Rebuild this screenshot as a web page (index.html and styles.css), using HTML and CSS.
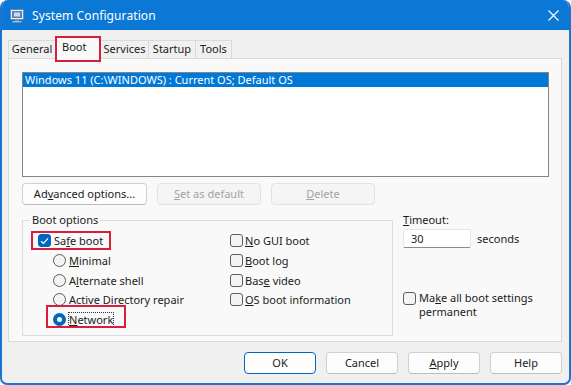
FILE: index.html
```html
<!DOCTYPE html>
<html>
<head>
<meta charset="utf-8">
<link rel="stylesheet" href="styles.css">
</head>
<body>
<div class="window">
  <div class="titlebar">
    <svg class="app-icon" width="14" height="14" viewBox="0 0 14 14">
      <rect x="0.5" y="0.5" width="13" height="10" rx="1" fill="#e8edf3" stroke="#7a8796"/>
      <rect x="2" y="2" width="10" height="7" fill="#4f86c9"/>
      <rect x="4" y="3.5" width="6" height="4" fill="#c9d9ee"/>
      <rect x="5" y="10.5" width="4" height="1.5" fill="#8895a5"/>
      <rect x="2.5" y="12" width="9" height="1.5" fill="#aab4c0"/>
    </svg>
    <span class="title">System Configuration</span>
    <svg class="close" width="11" height="11" viewBox="0 0 11 11">
      <path d="M0.5 0.5 L10.5 10.5 M10.5 0.5 L0.5 10.5" stroke="#fff" stroke-width="1.1" fill="none"/>
    </svg>
  </div>
  <div class="client">
    <div class="tabs">
      <div class="tab t-general">General</div>
      <div class="tab active t-boot mark-tab">Boot</div>
      <div class="tab t-services">Services</div>
      <div class="tab t-startup">Startup</div>
      <div class="tab t-tools">Tools</div>
    </div>
    <div class="panel">
      <div class="oslist">
        <div class="osrow">Windows 11 (C:\WINDOWS) : Current OS; Default OS</div>
      </div>
      <div class="btnrow">
        <div class="btn b-adv">Ad<u>v</u>anced options...</div>
        <div class="btn b-mid disabled"><u>S</u>et as default</div>
        <div class="btn b-mid disabled"><u>D</u>elete</div>
      </div>
      <div class="lower">
        <fieldset class="group">
          <legend>Boot options</legend>
          <div class="cols">
            <div class="col col-left">
              <div class="opt mark-safe"><span class="cb checked"><svg width="9" height="8" viewBox="0 0 9 8"><path d="M1 4.2 L3.4 6.4 L8 1.4" stroke="#fff" stroke-width="1.2" fill="none"/></svg></span><span>Sa<u>f</u>e boot</span></div>
              <div class="opt sub"><span class="rb"></span><span><u>M</u>inimal</span></div>
              <div class="opt sub"><span class="rb"></span><span>A<u>l</u>ternate shell</span></div>
              <div class="opt sub"><span class="rb"></span><span>Active Directory repair</span></div>
              <div class="opt sub mark-net"><span class="rb on"></span><span class="focus"><u>N</u>etwork</span></div>
            </div>
            <div class="col col-mid">
              <div class="opt tight"><span class="cb"></span><span><u>N</u>o GUI boot</span></div>
              <div class="opt tight"><span class="cb"></span><span><u>B</u>oot log</span></div>
              <div class="opt tight"><span class="cb"></span><span>Bas<u>e</u> video</span></div>
              <div class="opt tight"><span class="cb"></span><span><u>O</u>S boot information</span></div>
            </div>
          </div>
        </fieldset>
        <div class="right">
          <div class="label"><u>T</u>imeout:</div>
          <div class="timeout-row">
            <div class="input">30</div>
            <span>seconds</span>
          </div>
          <div class="perm">
            <span class="cb"></span>
            <span class="perm-text">Ma<u>k</u>e all boot settings<br>permanent</span>
          </div>
        </div>
      </div>
    </div>
    <div class="footer">
      <div class="btn fbtn default">OK</div>
      <div class="btn fbtn">Cancel</div>
      <div class="btn fbtn"><u>A</u>pply</div>
      <div class="btn fbtn">Help</div>
    </div>
  </div>
</div>
</body>
</html>
```

FILE: styles.css
```css
html, body {
  margin: 0;
  padding: 0;
  background: #ffffff;
}
body {
  width: 571px;
  height: 385px;
  font-family: "Noto Sans", "Open Sans", sans-serif;
  font-size: 11px;
  color: #1b1b1b;
  overflow: hidden;
}
u {
  text-decoration: underline;
  text-underline-offset: 1px;
}
.window {
  box-sizing: border-box;
  width: 571px;
  height: 385px;
  border: 2px solid #1b74d0;
  border-top: 0;
  border-radius: 8px 8px 7px 7px;
  background: #f0f0f0;
  overflow: hidden;
  display: flex;
  flex-direction: column;
}
.titlebar {
  height: 30px;
  flex: none;
  background: #0b78d6;
  display: flex;
  align-items: center;
  padding: 0 10px 0 8px;
  color: #ffffff;
  font-size: 12px;
}
.app-icon {
  flex: none;
  margin-top: 1px;
}
.title {
  margin-left: 8px;
  flex: 1;
  letter-spacing: 0.1px;
}
.close {
  flex: none;
  margin-right: 0;
}
.client {
  flex: 1;
  display: flex;
  flex-direction: column;
  padding: 7px 7px 0 6px;
}
.tabs {
  display: flex;
  align-items: flex-end;
  height: 21px;
  position: relative;
  z-index: 2;
}
.tab {
  box-sizing: border-box;
  height: 18px;
  line-height: 16px;
  border: 1px solid #dadada;
  border-bottom: 0;
  background: #f0f0f0;
  text-align: center;
  margin-right: -1px;
}
.t-general { width: 48px; }
.t-boot { width: 46px; }
.t-services { width: 49px; }
.t-startup { width: 48px; }
.t-tools { width: 37px; }
.tab.active {
  height: 22px;
  line-height: 18px;
  background: #f9f9f9;
  margin-bottom: -1px;
  position: relative;
  text-align: left;
  padding-left: 6px;
}
.mark-tab::after {
  content: "";
  position: absolute;
  left: -1px;
  top: -2px;
  width: 46px;
  height: 26px;
  box-sizing: border-box;
  border: 2px solid #d81e3a;
}
.panel {
  box-sizing: border-box;
  height: 284px;
  flex: none;
  border: 1px solid #dadada;
  background: #f9f9f9;
  padding: 13px 12px 0 13px;
  position: relative;
  z-index: 1;
}
.oslist {
  box-sizing: border-box;
  height: 105px;
  border: 1px solid #858585;
  background: #ffffff;
  padding: 0;
}
.osrow {
  height: 14px;
  line-height: 14px;
  background: #0078d7;
  color: #ffffff;
  padding-left: 2px;
  white-space: nowrap;
}
.btnrow {
  display: flex;
  gap: 10px;
  margin-top: 6px;
}
.btn {
  box-sizing: border-box;
  height: 22px;
  line-height: 20px;
  border: 1px solid #d0d0d0;
  border-bottom-color: #bdbdbd;
  border-radius: 4px;
  background: #fdfdfd;
  text-align: center;
  white-space: nowrap;
}
.b-adv { width: 125px; }
.b-mid { width: 104px; }
.btn.disabled {
  color: #a3a3a3;
  background: #f5f5f5;
  border-color: #e2e2e2;
}
.lower {
  display: flex;
  margin-top: 8px;
}
.group {
  box-sizing: border-box;
  width: 371px;
  height: 123px;
  margin: 0;
  padding: 4px 0 0 15px;
  border: 1px solid #dcdcdc;
  min-width: 0;
}
.group legend {
  padding: 0 2px;
  margin-left: -8px;
  line-height: 14px;
  height: 14px;
}
.cols {
  display: flex;
}
.col-left {
  width: 192px;
}
.opt {
  display: flex;
  align-items: center;
  height: 19.7px;
  gap: 3px;
  position: relative;
  white-space: nowrap;
}
.opt.tight {
  gap: 2px;
}
.opt.sub {
  margin-left: 15px;
}
.col-mid {
  padding-top: 0;
}
.cb {
  box-sizing: border-box;
  flex: none;
  width: 13px;
  height: 13px;
  border: 1px solid #5d5d5d;
  border-radius: 3px;
  background: #f4f4f4;
  display: flex;
  align-items: center;
  justify-content: center;
}
.cb.checked {
  background: #0067c0;
  border-color: #0067c0;
}
.rb {
  box-sizing: border-box;
  flex: none;
  width: 13px;
  height: 13px;
  border: 1px solid #5d5d5d;
  border-radius: 50%;
  background: #f4f4f4;
}
.rb.on {
  border: 4px solid #0067c0;
  background: #ffffff;
}
.focus {
  outline: 1px dotted #333333;
  outline-offset: 0;
  line-height: 13px;
}
.mark-safe::after {
  content: "";
  position: absolute;
  left: -7px;
  top: 0;
  width: 80px;
  height: 19px;
  box-sizing: border-box;
  border: 2px solid #d81e3a;
}
.mark-net::after {
  content: "";
  position: absolute;
  left: -7px;
  top: -5px;
  width: 80px;
  height: 23px;
  box-sizing: border-box;
  border: 2px solid #d81e3a;
}
.right {
  margin-left: 10px;
  display: flex;
  flex-direction: column;
}
.label {
  line-height: 14px;
  height: 14px;
}
.timeout-row {
  display: flex;
  align-items: center;
  gap: 6px;
  margin-top: 2px;
}
.input {
  box-sizing: border-box;
  width: 68px;
  height: 19px;
  line-height: 18px;
  background: #ffffff;
  border: 1px solid #e6e6e6;
  border-bottom-color: #8a8a8a;
  border-radius: 2px;
  padding-left: 7px;
}
.perm {
  display: flex;
  align-items: flex-start;
  gap: 3px;
  margin-top: 44px;
}
.perm .cb {
  margin-top: 0;
}
.perm-text {
  line-height: 14px;
  margin-top: -1px;
}
.footer {
  display: flex;
  justify-content: flex-end;
  gap: 10px;
  margin-top: 10px;
}
.fbtn {
  width: 72px;
}
.fbtn.default {
  border-color: #0067c0;
}
```
